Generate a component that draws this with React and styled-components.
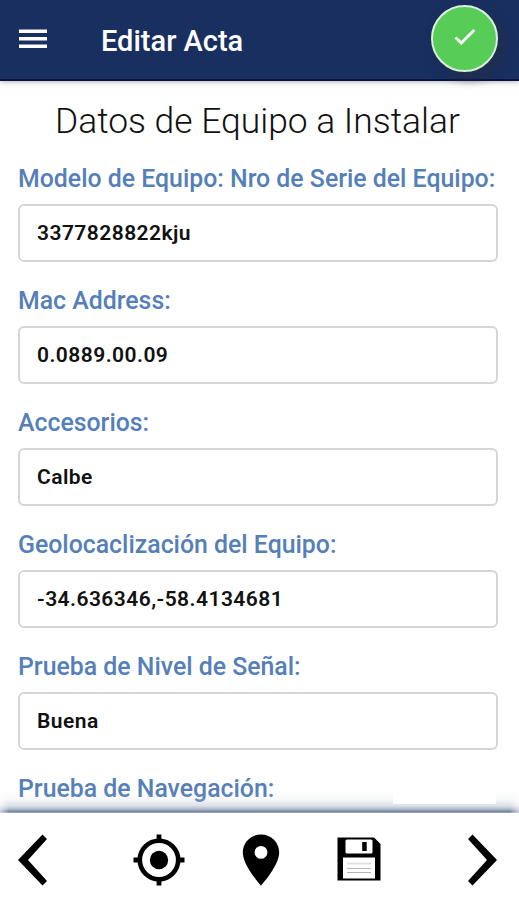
import React from 'react'
import styled, { createGlobalStyle } from 'styled-components'

const fields = [
    { label: 'Modelo de Equipo: Nro de Serie del Equipo:', value: '3377828822kju' },
    { label: 'Mac Address:', value: '0.0889.00.09' },
    { label: 'Accesorios:', value: 'Calbe' },
    { label: 'Geolocaclización del Equipo:', value: '-34.636346,-58.4134681' },
    { label: 'Prueba de Nivel de Señal:', value: 'Buena' },
    { label: 'Prueba de Navegación:' },
]

export default function App() {
    return (
        <Screen>
            <GlobalStyle />
            <TopBar>
                <PlainButton aria-label="menu">
                    <svg width="28" height="20" viewBox="0 0 28 20" fill="#fff">
                        <path d="M0 0.5h28v3.6H0zM0 8h28v3.6H0zM0 15.5h28v3.6H0z" />
                    </svg>
                </PlainButton>
                <Title>Editar Acta</Title>
                <ConfirmButton aria-label="confirmar">
                    <svg width="22" height="18" viewBox="0 0 22 18" fill="none" stroke="#fff" strokeWidth="2.7">
                        <path d="M1.5 9.5L7.2 15L20.3 2" />
                    </svg>
                </ConfirmButton>
            </TopBar>

            <Form>
                <Heading>Datos de Equipo a Instalar</Heading>
                {fields.map((field) => (
                    <Field key={field.label}>
                        <Label>{field.label}</Label>
                        {field.value && <Input defaultValue={field.value} />}
                    </Field>
                ))}
            </Form>

            <BottomBar>
                <PlainButton aria-label="anterior">
                    <svg width="29" height="52" viewBox="0 0 29 52">
                        <path d="M24.5 0.5L29 5L10 26L29 47L24.5 51.5L0 26z" />
                    </svg>
                </PlainButton>
                <Tools>
                    <PlainButton aria-label="ubicar">
                        <svg width="52" height="52" viewBox="0 0 52 52">
                            <circle cx="26" cy="26" r="19.2" fill="none" stroke="#000" strokeWidth="4.6" />
                            <circle cx="26" cy="26" r="9.2" />
                            <path d="M23.6 0.5h4.8v6h-4.8zM23.6 45.5h4.8v6h-4.8zM0.5 23.6h6v4.8h-6zM45.5 23.6h6v4.8h-6z" />
                        </svg>
                    </PlainButton>
                    <PlainButton aria-label="mapa">
                        <svg width="38" height="52" viewBox="0 0 38 52">
                            <path fillRule="evenodd" d="M19 0.5C8.8 0.5 0.8 8.4 0.8 18.4C0.8 31.8 19 51.5 19 51.5S37.2 31.8 37.2 18.4C37.2 8.4 29.2 0.5 19 0.5zM19 24.8a6.4 6.4 0 1 1 0-12.8a6.4 6.4 0 1 1 0 12.8z" />
                        </svg>
                    </PlainButton>
                    <PlainButton aria-label="guardar">
                        <svg width="44" height="46" viewBox="0 0 44 46">
                            <path d="M0.5 0.5h36.5L43.5 7v36.5h-43z" />
                            <rect x="8.5" y="2.5" width="27" height="14" rx="1.5" fill="#fff" />
                            <rect x="25.2" y="5" width="4.5" height="9" />
                            <rect x="6" y="20.5" width="32" height="21" fill="#fff" />
                            <path d="M10 26.5h24" stroke="#e0e0e0" strokeWidth="2" />
                            <path d="M10 31.5h24M10 35.5h24" stroke="#b4b4b4" strokeWidth="1.2" />
                        </svg>
                    </PlainButton>
                </Tools>
                <PlainButton aria-label="siguiente">
                    <svg width="29" height="52" viewBox="0 0 29 52">
                        <path d="M4.5 0.5L0 5L19 26L0 47L4.5 51.5L29 26z" />
                    </svg>
                </PlainButton>
            </BottomBar>
        </Screen>
    )
}

const GlobalStyle = createGlobalStyle`
    body {
        margin: 0;
        font-family: Roboto, sans-serif;
    }
    * {
        box-sizing: border-box;
    }
`;

const Screen = styled.div`
    display: flex;
    flex-direction: column;
    width: 519px;
    height: 900px;
    overflow: hidden;
    background: #fff;
`;

const PlainButton = styled.button`
    display: flex;
    padding: 0;
    border: 0;
    background: none;
`;

const TopBar = styled.header`
    display: flex;
    flex: none;
    align-items: flex-start;
    height: 81px;
    padding: 0 21px 0 19px;
    background: #192f60;
    border-bottom: 2px solid #061448;
    box-shadow: 0 1px 5px rgba(0, 0, 0, 0.3);

    > ${PlainButton} {
        margin-top: 29px;
    }
`;

const Title = styled.h1`
    flex: 1;
    margin: 24px 0 0 54px;
    color: #fff;
    font-size: 29px;
    font-weight: 500;
    line-height: 34px;
`;

const ConfirmButton = styled.button`
    display: flex;
    align-items: center;
    justify-content: center;
    width: 67px;
    height: 67px;
    margin-top: 5px;
    padding: 0 0 4px;
    border: 2px solid #d9efdf;
    border-radius: 50%;
    background: #57cd58;
    box-shadow: 5px 6px 12px rgba(40, 45, 60, 0.6);
`;

const Form = styled.main`
    flex: 1;
    min-height: 0;
    padding: 19px 21px 0 18px;
    overflow: hidden;
`;

const Heading = styled.h2`
    margin: 0 0 16px;
    padding-left: 37px;
    color: #111;
    font-size: 35.4px;
    font-weight: 300;
    line-height: 42px;
    white-space: nowrap;
`;

const Field = styled.div`
    height: 122px;
`;

const Label = styled.label`
    display: block;
    height: 46px;
    color: #557fb8;
    font-size: 24.85px;
    font-weight: 500;
    line-height: 42px;
    white-space: nowrap;
`;

const Input = styled.input`
    display: block;
    width: 100%;
    height: 58px;
    padding: 0 17px;
    border: 2px solid #d6d6d6;
    border-radius: 6px;
    color: #111;
    font-family: inherit;
    font-size: 21px;
    font-weight: 600;
    letter-spacing: 0.45px;
`;

const BottomBar = styled.nav`
    display: flex;
    flex: none;
    align-items: center;
    justify-content: space-between;
    position: relative;
    height: 87px;
    padding: 7px 22px 0 18px;
    background: #fff;

    /* shade cast over the scrolled form */
    &::before {
        content: '';
        position: absolute;
        bottom: 100%;
        left: 0;
        right: 0;
        height: 22px;
        background: linear-gradient(to bottom, rgba(190, 200, 212, 0), rgba(195, 203, 212, 0.12) 35%, rgba(185, 195, 206, 0.45) 65%, rgba(165, 178, 196, 0.85) 82%, #7787a3 93%, #a5b0c2);
        mask-image: linear-gradient(to right, rgba(0, 0, 0, 0.4), #000 9px, #000 calc(100% - 9px), rgba(0, 0, 0, 0.4));
    }

    &::after {
        content: '';
        position: absolute;
        bottom: calc(100% + 9px);
        right: 23px;
        width: 103px;
        height: 16px;
        background: #fff;
    }
`;

const Tools = styled.div`
    display: flex;
    align-items: center;
    gap: 57px;
    margin-right: 1px;
`;
